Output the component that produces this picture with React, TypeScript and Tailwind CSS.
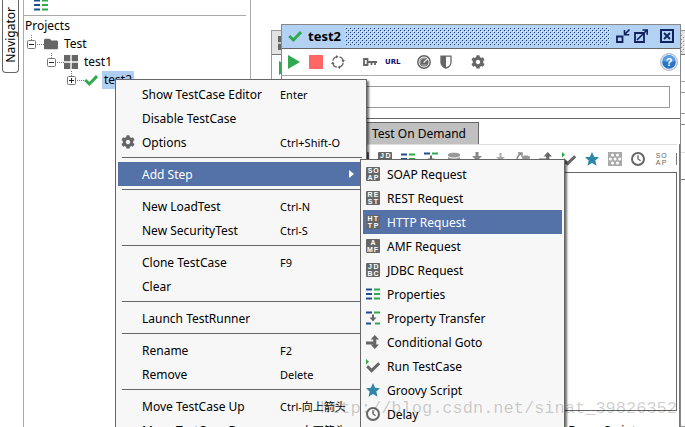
import type { ReactNode } from "react";
import clsx from "clsx";
import { FaCog, FaFolder, FaStar } from "react-icons/fa";

const GREY = "#666";
const NAVY = "#1d4f8c";
const GREEN = "#2fa84f";

type IconProps = { className?: string };

function Svg({ children, className = "size-3.5" }: { children: ReactNode; className?: string }) {
  return (
    <svg viewBox="0 0 14 14" className={clsx("shrink-0", className)} fill="none" aria-hidden="true">
      {children}
    </svg>
  );
}

// Four letters in two rows on a small grey tile
function LetterIcon({ top, bottom, plain }: { top: string; bottom: string; plain?: boolean }) {
  return (
    <Svg>
      {!plain && <rect width="14" height="14" rx="1" fill={GREY} />}
      <g
        fill={plain ? "#666" : "#fff"}
        fontFamily="Liberation Sans, sans-serif"
        fontSize="7"
        fontWeight={plain ? 400 : 700}
        textAnchor="middle"
      >
        {top.split("").map((c, i) => (
          <text key={i} x={top.length === 1 ? 7 : 4 + i * 6} y="6">
            {c}
          </text>
        ))}
        {bottom.split("").map((c, i) => (
          <text key={i} x={4 + i * 6} y="13">
            {c}
          </text>
        ))}
      </g>
    </Svg>
  );
}

function PropertiesIcon() {
  return (
    <Svg>
      <path d="M0 2.5h6M0 7h6M0 11.5h6" stroke={NAVY} strokeWidth="2" />
      <path d="M8 2.5h6M8 7h6M8 11.5h6" stroke={GREEN} strokeWidth="2" />
    </Svg>
  );
}

function TransferIcon() {
  return (
    <Svg>
      <path d="M0 1.5h6M0 12.5h5" stroke={NAVY} strokeWidth="2" />
      <path d="M8 1.5h6M9 12.5h5" stroke={GREEN} strokeWidth="2" />
      <path d="M7 3.5V8" stroke={GREY} strokeWidth="2" />
      <path d="M3.5 6.5h7L7 10.5z" fill={GREY} />
    </Svg>
  );
}

function GotoIcon() {
  return (
    <Svg>
      <path d="M0 8h8M8.8 3v8" stroke={GREY} strokeWidth="3" />
      <path d="M4.6 4.6 8.8 0 13 4.600zM4.600 9.400 8.800 14 13 9.400z" fill={GREY} />
    </Svg>
  );
}

function RunIcon() {
  return (
    <Svg>
      <path d="M0 0v5.5L3 2.700z" fill={GREEN} />
      <path d="m1.200 7.200 4.400 4.400 7.600-7.400" stroke={GREY} strokeWidth="3" />
    </Svg>
  );
}

function ClockIcon() {
  return (
    <Svg>
      <circle cx="7" cy="7" r="6" stroke={GREY} strokeWidth="2" />
      <path d="M7 3.2V7l2.6 1.8" stroke={GREY} strokeWidth="1.3" />
    </Svg>
  );
}

function CheckIcon({ className }: IconProps) {
  return (
    <Svg className={className}>
      <path d="m1.2 7 4.2 4 7.6-8" stroke={GREEN} strokeWidth="3" />
    </Svg>
  );
}

function GridIcon() {
  return (
    <Svg>
      <path d="M0 0h6.3v6.3H0zM7.7 0H14v6.3H7.7zM0 7.7h6.3V14H0zM7.7 7.7H14V14H7.7z" fill={GREY} />
    </Svg>
  );
}

function DatabaseIcon() {
  return (
    <Svg>
      <path d="M1 2.5C1 0 13 0 13 2.5v9c0 2.5-12 2.5-12 0z" fill="#999" />
      <path d="M1 4.5c2 2 10 2 12 0M1 8c2 2 10 2 12 0" stroke="#fff" />
    </Svg>
  );
}

function DownloadIcon() {
  return (
    <Svg>
      <path d="M7 0v6M1 11h12" stroke="#888" strokeWidth="3" />
      <path d="M2 4h10L7 9z" fill="#888" />
    </Svg>
  );
}

function UploadIcon() {
  return (
    <Svg>
      <path d="M7.5 1v7M1 11h12" stroke="#aaa" strokeWidth="2" />
      <path d="M3 5h9L7.5 9z" fill="#aaa" />
      <path d="M2 7v4M12 7v4" stroke="#bbb" strokeWidth="2" />
    </Svg>
  );
}

function RefreshDataIcon() {
  return (
    <Svg>
      <path d="M1 8c0-3 1-5 4-6M2 1h4v4" stroke="#888" strokeWidth="1.4" />
      <path d="M6 5c0-2 8-2 8 0v7c0 2-8 2-8 0z" fill="#999" />
      <path d="M6 7c2 1 6 1 8 0" stroke="#fff" />
    </Svg>
  );
}

function MockIcon() {
  return (
    <Svg>
      <rect width="14" height="14" fill="#aaa" />
      <g fill="#fff">
        <circle cx="4.5" cy="3" r="1.5" />
        <circle cx="9.5" cy="3" r="1.5" />
        <circle cx="2.3" cy="7" r="1.5" />
        <circle cx="7" cy="7" r="1.5" />
        <circle cx="11.7" cy="7" r="1.5" />
        <circle cx="4.5" cy="11" r="1.5" />
        <circle cx="9.5" cy="11" r="1.5" />
      </g>
    </Svg>
  );
}

function StarIcon() {
  return (
    <Svg>
      <path d="m7 0 2.100 4.800 4.900.5-3.700 3.300 1.200 5.200L7 11.100l-4.500 2.700 1.200-5.200L0 5.300l4.900-.5z" fill="#2f86a6" />
    </Svg>
  );
}

function GearIcon() {
  return <FaCog className="size-3.5 shrink-0 text-[#666]" />;
}

function PlayIcon() {
  return (
    <Svg>
      <path d="M1 0v14l12-7z" fill={GREEN} />
    </Svg>
  );
}

function LoopIcon() {
  return (
    <Svg>
      <circle cx="7" cy="7" r="5.3" stroke={GREY} strokeWidth="1.3" strokeDasharray="6.3 2" strokeDashoffset="-1" />
      <path d="M5 0v3.6L7.4 1.8zM14 5h-3.6l1.8 2.4zM9 14v-3.6l-2.4 1.8zM0 9h3.6L1.8 6.6z" fill={GREY} />
    </Svg>
  );
}

function KeyIcon() {
  return (
    <Svg>
      <path d="M1 4h3.5v6H1z" stroke={GREY} strokeWidth="1.8" />
      <path d="M5 7h9M8.5 7v3M12 7v3" stroke={GREY} strokeWidth="1.8" />
    </Svg>
  );
}

function GaugeIcon() {
  return (
    <Svg>
      <circle cx="7" cy="7" r="6.2" stroke={GREY} strokeWidth="1.5" />
      <circle cx="7" cy="7" r="4.6" fill={GREY} />
      <path d="M3.4 8.5a3.8 3.8 0 0 1 5-5" stroke="#ddd" strokeWidth=".7" />
      <path d="m6.6 7.6 4.2-4" stroke="#fff" strokeWidth="1.2" />
      <path d="M4.5 10h5" stroke="#ddd" strokeWidth=".7" />
    </Svg>
  );
}

function ShieldIcon() {
  return (
    <Svg>
      <path d="M2 1.2h10v6c0 3-2.5 5-5 6-2.5-1-5-3-5-6z" stroke={GREY} strokeWidth="1.3" />
      <path d="M7 1H2v6.2c0 3 2.5 5 5 6z" fill={GREY} />
    </Svg>
  );
}

function HelpIcon() {
  return (
    <svg viewBox="0 0 18 18" className="size-4.5" aria-hidden="true">
      <circle cx="9" cy="9" r="8.4" fill="#e8eef5" stroke="#9db0c4" />
      <circle cx="9" cy="9" r="6.8" fill="#2a74c8" />
      <path d="M3 8a6 6 0 0 1 12 0c-3 1.5-9 1.5-12 0z" fill="#5c9ce0" />
      <text x="9" y="13" fill="#fff" fontFamily="Liberation Sans, sans-serif" fontSize="11" fontWeight="700" textAnchor="middle">
        ?
      </text>
    </svg>
  );
}

function Bumps({ id, dark, light }: { id: string; dark: string; light: string }) {
  return (
    <svg className="h-4.5 min-w-0 flex-1" aria-hidden="true">
      <defs>
        <pattern id={id} width="4" height="4" patternUnits="userSpaceOnUse">
          <path d="M0 0h1v1H0zM2 2h1v1H2z" fill={light} />
          <path d="M1 1h1v1H1zM3 3h1v1H3z" fill={dark} />
        </pattern>
      </defs>
      <rect width="100%" height="100%" fill={`url(#${id})`} />
    </svg>
  );
}

type MenuEntry = { label: string; keys?: string; icon?: ReactNode; active?: boolean; submenu?: boolean };

const caseMenu: MenuEntry[][] = [
  [
    { label: "Show TestCase Editor", keys: "Enter" },
    { label: "Disable TestCase" },
    { label: "Options", keys: "Ctrl+Shift-O", icon: <GearIcon /> },
  ],
  [{ label: "Add Step", active: true, submenu: true }],
  [
    { label: "New LoadTest", keys: "Ctrl-N" },
    { label: "New SecurityTest", keys: "Ctrl-S" },
  ],
  [{ label: "Clone TestCase", keys: "F9" }, { label: "Clear" }],
  [{ label: "Launch TestRunner" }],
  [
    { label: "Rename", keys: "F2" },
    { label: "Remove", keys: "Delete" },
  ],
  [
    { label: "Move TestCase Up", keys: "Ctrl-向上箭头" },
    { label: "Move TestCase Down", keys: "Ctrl-向下箭头" },
  ],
];

const stepMenu: MenuEntry[] = [
  { label: "SOAP Request", icon: <LetterIcon top="SO" bottom="AP" /> },
  { label: "REST Request", icon: <LetterIcon top="RE" bottom="ST" /> },
  { label: "HTTP Request", icon: <LetterIcon top="HT" bottom="TP" />, active: true },
  { label: "AMF Request", icon: <LetterIcon top="A" bottom="MF" /> },
  { label: "JDBC Request", icon: <LetterIcon top="JD" bottom="BC" /> },
  { label: "Properties", icon: <PropertiesIcon /> },
  { label: "Property Transfer", icon: <TransferIcon /> },
  { label: "Conditional Goto", icon: <GotoIcon /> },
  { label: "Run TestCase", icon: <RunIcon /> },
  { label: "Groovy Script", icon: <StarIcon /> },
  { label: "Delay", icon: <ClockIcon /> },
];

const stepTools: { name: string; icon: ReactNode }[] = [
  { name: "SOAP Request", icon: <LetterIcon top="SO" bottom="AP" /> },
  { name: "REST Request", icon: <LetterIcon top="RE" bottom="ST" /> },
  { name: "HTTP Request", icon: <LetterIcon top="HT" bottom="TP" /> },
  { name: "AMF Request", icon: <LetterIcon top="A" bottom="MF" /> },
  { name: "JDBC Request", icon: <LetterIcon top="JD" bottom="BC" /> },
  { name: "Properties", icon: <PropertiesIcon /> },
  { name: "Property Transfer", icon: <TransferIcon /> },
  { name: "DataSource", icon: <DatabaseIcon /> },
  { name: "DataSink", icon: <DownloadIcon /> },
  { name: "DataGen", icon: <UploadIcon /> },
  { name: "DataSource Loop", icon: <RefreshDataIcon /> },
  { name: "Conditional Goto", icon: <GotoIcon /> },
  { name: "Run TestCase", icon: <RunIcon /> },
  { name: "Groovy Script", icon: <StarIcon /> },
  { name: "Mock Response", icon: <MockIcon /> },
  { name: "Delay", icon: <ClockIcon /> },
  { name: "SOAP Mock", icon: <LetterIcon top="SO" bottom="AP" plain /> },
];

function MenuItem({ label, keys, icon, active, submenu }: MenuEntry) {
  return (
    <button
      type="button"
      role="menuitem"
      className={clsx(
        "flex h-6 w-full items-center pr-1 pl-[3px] text-left leading-4 whitespace-nowrap",
        active ? "bg-[#5572a8] text-white" : "text-black"
      )}
    >
      <span className="w-[21px] shrink-0">{icon}</span>
      <span className="flex-1 pt-0.5">{label}</span>
      {keys && <span className="w-20 pt-0.5 text-[11px]">{keys}</span>}
      {submenu && (
        <svg viewBox="0 0 5 8" className="mr-1.5 h-2 w-[5px]" aria-hidden="true">
          <path d="M0 0v8l5-4z" fill="#fff" />
        </svg>
      )}
    </button>
  );
}

function TreeRow({ label, icon, level, open, selected }: { label: string; icon: ReactNode; level: string; open: boolean; selected?: boolean }) {
  return (
    <li className={clsx("flex h-[18px] items-center", level)}>
      <button type="button" aria-label={open ? `Collapse ${label}` : `Expand ${label}`}>
        <svg viewBox="0 0 17 18" className="block h-[18px] w-[17px]" fill="none" aria-hidden="true">
          <path d="M4.5 0v5M10 9.5h7" stroke="#777" strokeDasharray="1 1" />
          <rect x=".5" y="5.5" width="8" height="8" rx="1" fill="#fff" stroke="#777" />
          <path d={open ? "M2 9.5h5" : "M2 9.5h5M4.5 7v5"} stroke="#222" />
        </svg>
      </button>
      {icon}
      <span className={clsx("ml-1 px-0.5 leading-[18px]", selected && "bg-[#aecff2]")}>{label}</span>
    </li>
  );
}

function Sidebar() {
  return (
    <aside className="flex w-[251px] shrink-0 border-r border-[#aaa]">
      <div className="w-6 shrink-0 border-r border-[#aaa] pl-0.5">
        <button type="button" className="flex h-[73px] w-[17px] items-center justify-center rounded-b border border-t-0 border-[#666] pb-0.5">
          <span className="rotate-180 leading-4 [writing-mode:vertical-rl]">Navigator</span>
        </button>
      </div>
      <div className="min-w-0 flex-1">
        <div className="mr-1 flex h-4 items-start border-b border-[#aaa] pl-2.5">
          <button type="button" aria-label="Properties" className="-mt-0.5">
            <PropertiesIcon />
          </button>
        </div>
        <h2 className="mt-px px-px leading-[18px]">Projects</h2>
        <ul>
          <TreeRow label="Test" level="pl-[3px]" icon={<FaFolder className="size-3.5 text-[#666]" />} open />
          <TreeRow label="test1" level="pl-[23px]" icon={<GridIcon />} open />
          <TreeRow label="test2" level="pl-[43px]" icon={<CheckIcon />} open={false} selected />
        </ul>
      </div>
    </aside>
  );
}

function BackWindow() {
  return (
    <section className="absolute top-[30px] -right-10 bottom-0 left-5 border border-[#999] bg-white">
      <div className="flex h-6 items-center gap-2 border-b border-[#777] bg-[#e2e2e2] pl-1.5">
        <GridIcon />
        <Bumps id="bumps-back" dark="#888" light="#fff" />
      </div>
      <div className="flex h-[27px] items-center border-b border-[#aaa] pl-1.5">
        <PlayIcon />
      </div>
      <div className="border-b border-[#888] py-2.5">
        <div className="h-[22px] border-y border-[#999]" />
      </div>
      <div className="h-7 border-b border-[#ddd]" />
      <div className="h-[27px] border-b border-[#777]" />
    </section>
  );
}

function TitleButtons() {
  return (
    <div className="flex items-center text-[#10235c]">
      <button type="button" aria-label="Minimize">
        <Svg>
          <path d="M1 7.5h5.5V13H1z" stroke="currentColor" strokeWidth="1.8" />
          <path d="M13.5.5 9 5M8.5 1v4.8h4.8" stroke="currentColor" strokeWidth="1.6" />
        </Svg>
      </button>
      <button type="button" aria-label="Maximize" className="ml-1">
        <Svg>
          <path d="M1 4h9v9H1z" stroke="currentColor" strokeWidth="1.8" />
          <path d="m3 11 10-10M8.5 1h4.7v4.7" stroke="currentColor" strokeWidth="1.6" />
        </Svg>
      </button>
      <button type="button" aria-label="Close" className="ml-3">
        <Svg>
          <path d="M1 1h12v12H1z" stroke="currentColor" strokeWidth="2" />
          <path d="m4 4 6 6M10 4l-6 6" stroke="currentColor" strokeWidth="1.8" />
        </Svg>
      </button>
    </div>
  );
}

function CaseWindow() {
  return (
    <section className="absolute top-6 right-1 bottom-0 left-[30px] flex flex-col overflow-hidden border border-b-0 border-[#888] bg-white">
      <header className="flex h-6 shrink-0 items-center border-b border-[#666] bg-[#b3d2f3] px-1.5 pb-0.5">
        <CheckIcon />
        <h1 className="mr-1 ml-1.5 text-[13px] leading-5 font-bold">test2</h1>
        <Bumps id="bumps-front" dark="#1c3a6e" light="#e4f0fc" />
        <div className="ml-1.5">
          <TitleButtons />
        </div>
      </header>
      <div className="flex h-[27px] shrink-0 items-center border-b border-[#aaa] pr-0.5 pl-[5px]">
        <button type="button" aria-label="Run">
          <PlayIcon />
        </button>
        <button type="button" aria-label="Stop" className="ml-2 size-3.5 bg-[#ff6666]" />
        <button type="button" aria-label="Loop" className="ml-2">
          <LoopIcon />
        </button>
        <button type="button" aria-label="Credentials" className="ml-[18px]">
          <KeyIcon />
        </button>
        <button type="button" className="ml-2 font-['DejaVu_Sans',sans-serif] text-[7px] leading-3 font-bold text-[#10106c]">
          URL
        </button>
        <button type="button" aria-label="Load test" className="ml-4">
          <GaugeIcon />
        </button>
        <button type="button" aria-label="Security test" className="ml-2">
          <ShieldIcon />
        </button>
        <button type="button" aria-label="Options" className="ml-[18px]">
          <GearIcon />
        </button>
        <button type="button" aria-label="Help" className="ml-auto">
          <HelpIcon />
        </button>
      </div>
      <div className="shrink-0 border-b border-[#666] px-2.5 py-2.5">
        <input type="text" aria-label="Description" className="block h-[22px] w-full border border-[#999] px-1" />
      </div>
      <div className="flex shrink-0 pt-[3px] pl-20">
        <button type="button" className="h-[22px] border-t border-r border-[#666] bg-[#c0c0c0] pr-3 pl-2.5 leading-5">
          Test On Demand
        </button>
      </div>
      <div className="flex min-h-0 flex-1 flex-col border-r border-[#777] pr-0.5">
        <div className="flex h-7 shrink-0 items-center gap-[9px] border-t border-[#ddd] pl-1">
          {stepTools.map((tool) => (
            <button key={tool.name} type="button" aria-label={tool.name}>
              {tool.icon}
            </button>
          ))}
          <span className="-ml-px h-3 w-px shrink-0 bg-[#777]" />
        </div>
        <div className="mb-2 min-h-0 flex-1 border border-[#666]" />
        <div className="h-2 shrink-0 pl-[262px] leading-6">TearDown Script</div>
      </div>
    </section>
  );
}

const menuClass = "absolute border border-[#666] bg-[#f7f7f7] px-0.5 pt-0.5 shadow-[2px_2px_2px_rgba(0,0,0,0.55)]";

export default function App() {
  return (
    <div className="relative flex h-screen overflow-hidden bg-white font-['Noto_Sans','Noto_Sans_CJK_SC',sans-serif] text-[12px] text-black">
      <Sidebar />
      <main className="relative min-w-0 flex-1">
        <BackWindow />
        <CaseWindow />
      </main>

      <div role="menu" aria-label="TestCase" className={clsx(menuClass, "top-[79px] left-[115px] w-[252px]")}>
        {caseMenu.map((group, i) => (
          <div key={i}>
            {i > 0 && <hr className="mt-[3px] mr-0.5 mb-1 ml-1 border-[#666]" />}
            {group.map((item) => (
              <MenuItem key={item.label} {...item} />
            ))}
          </div>
        ))}
      </div>
      <div role="menu" aria-label="Add Step" className={clsx(menuClass, "top-[159px] bottom-0 left-[360px] w-[205px] border-b-0")}>
        {stepMenu.map((item) => (
          <MenuItem key={item.label} {...item} />
        ))}
      </div>

      <p className="pointer-events-none absolute right-2 bottom-2 font-['Liberation_Mono',monospace] text-[17px] leading-5 text-black/20">
        http://blog.csdn.net/sinat_39826352
      </p>
    </div>
  );
}
